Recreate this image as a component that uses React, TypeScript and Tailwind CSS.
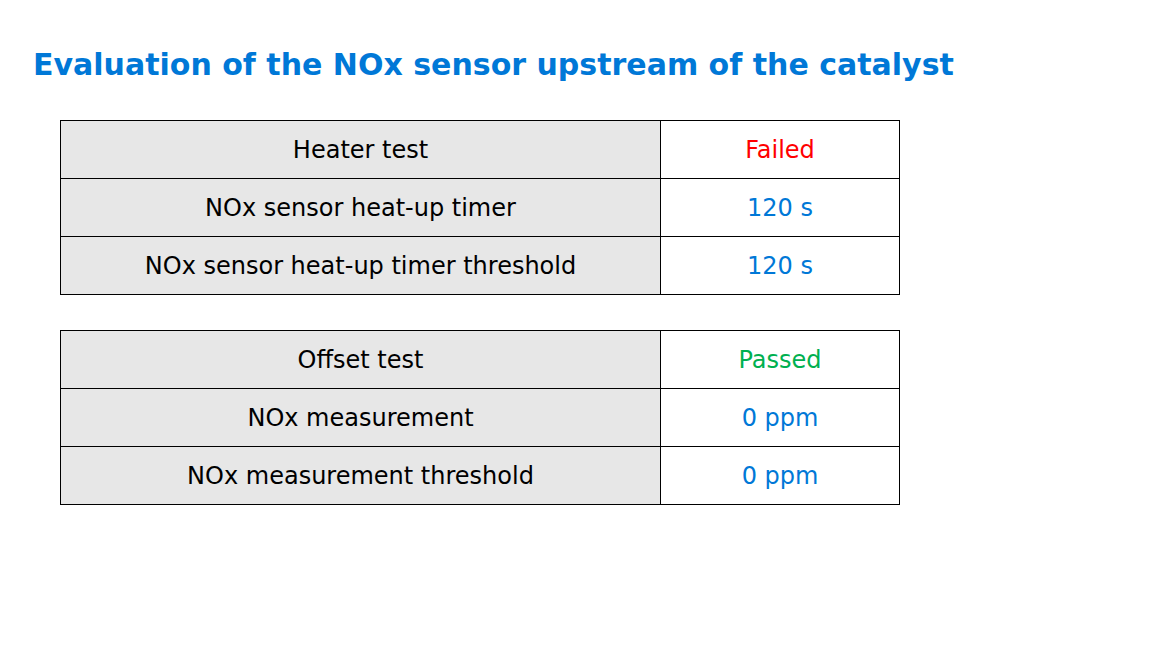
const heater = [
  { label: "Heater test", value: "Failed", color: "text-[#ff0000]" },
  { label: "NOx sensor heat-up timer", value: "120 s", color: "text-[#0078d7]" },
  { label: "NOx sensor heat-up timer threshold", value: "120 s", color: "text-[#0078d7]" },
];

const offset = [
  { label: "Offset test", value: "Passed", color: "text-[#00b050]" },
  { label: "NOx measurement", value: "0 ppm", color: "text-[#0078d7]" },
  { label: "NOx measurement threshold", value: "0 ppm", color: "text-[#0078d7]" },
];

function ResultTable({ rows }: { rows: { label: string; value: string; color: string }[] }) {
  return (
    <table className="w-[840px] border-collapse border border-[#555]">
      <tbody>
        {rows.map((r) => (
          <tr key={r.label} className="h-[58px]">
            <td className="w-[600px] border border-black bg-[#e7e7e7] p-0 text-center text-black">{r.label}</td>
            <td className={`border border-black bg-white p-0 text-center ${r.color}`}>{r.value}</td>
          </tr>
        ))}
      </tbody>
    </table>
  );
}

export default function App() {
  return (
    <div className="h-[648px] w-[1152px] bg-white font-['DejaVu_Sans',Verdana,sans-serif]">
      <h1 className="pl-[33px] pt-[46px] text-[30px] font-bold leading-[38px] text-[#0078d7]">
        Evaluation of the NOx sensor upstream of the catalyst
      </h1>
      <div className="flex flex-col gap-[35px] pl-[60px] pt-[36px] text-[24px]">
        <ResultTable rows={heater} />
        <ResultTable rows={offset} />
      </div>
    </div>
  );
}
